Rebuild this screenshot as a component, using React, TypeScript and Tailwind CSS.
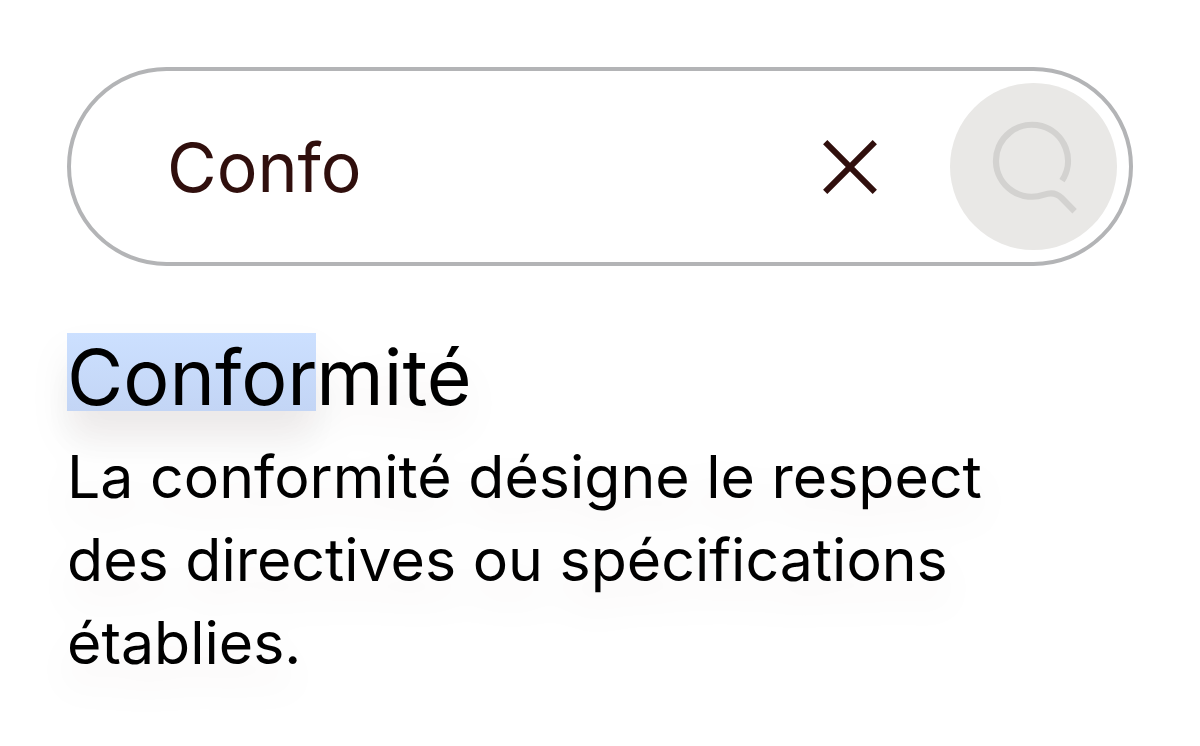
import { useState } from "react";

export default function App() {
  const [query, setQuery] = useState("Confo");

  return (
    <main className="min-h-screen bg-white px-[67px] pt-[67px] font-['Inter',sans-serif] text-black">
      <form
        role="search"
        onSubmit={(event) => event.preventDefault()}
        className="flex items-center rounded-full border-4 border-[#b3b4b6] bg-white py-3 pr-3 pl-24"
      >
        <input
          type="text"
          aria-label="Rechercher"
          value={query}
          onChange={(event) => setQuery(event.target.value)}
          className="min-w-0 flex-1 bg-transparent text-[68px] leading-[80px] text-[#300f0d] outline-none"
        />
        <button
          type="button"
          aria-label="Effacer"
          onClick={() => setQuery("")}
          className="mr-[72px] shrink-0 text-[#300f0d]"
        >
          <svg className="block size-14" viewBox="0 0 56 56" fill="none" stroke="currentColor" strokeWidth="6">
            <path d="M3.2 3.2L52.8 52.8M52.8 3.2L3.2 52.8" />
          </svg>
        </button>
        <button
          type="submit"
          aria-label="Lancer la recherche"
          className="flex size-[167px] shrink-0 items-center justify-center rounded-full bg-[#e9e8e6] text-[#d3d2d0]"
        >
          <svg className="block size-[100px]" viewBox="0 0 100 100" fill="none" stroke="currentColor" strokeWidth="6.2">
            <path d="M78 63.6A36 36 0 1 0 60.2 77.6C66.8 75.2 72.6 75.8 77.6 81L90.6 94.2" />
          </svg>
        </button>
      </form>

      <section className="mt-[67px] drop-shadow-[0_22px_18px_rgba(48,15,13,0.06)]">
        <h1 className="flex text-[77px] leading-[68px]">
          <span className="bg-linear-to-b from-[#cce0ff] to-[#c3d5f5] pt-[10px] shadow-[0_36px_40px_rgba(48,15,13,0.04)]">
            Confor
          </span>
          <span className="pt-[10px]">mité</span>
        </h1>
        <p className="relative mt-6 max-w-[960px] text-[59px] leading-[83px]">
          La conformité désigne le respect des directives ou spécifications établies.
        </p>
      </section>
    </main>
  );
}
